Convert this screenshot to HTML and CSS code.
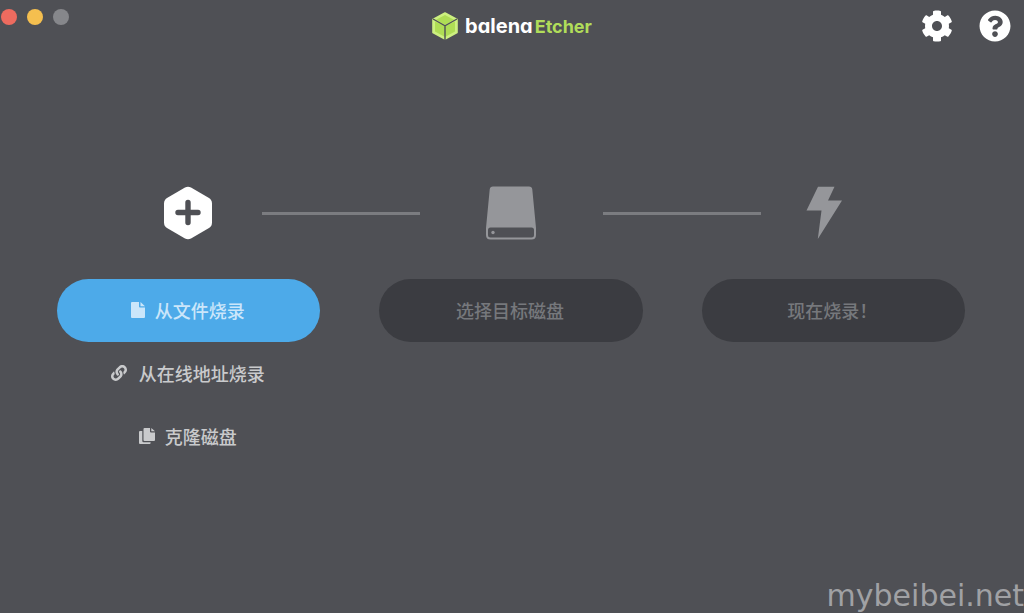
FILE: index.html
```
<!DOCTYPE html>
<html lang="zh-CN">
<head>
  <meta charset="UTF-8" />
  <meta name="viewport" content="width=device-width, initial-scale=1.0" />
  <title>balenaEtcher</title>
  <link rel="stylesheet" href="styles.css">
</head>
<body>
  <header class="topbar">
    <div class="lights">
      <span class="light red"></span>
      <span class="light yellow"></span>
      <span class="light grey"></span>
    </div>
    <div class="logo">
      <svg width="26" height="28" viewBox="0 0 26 28">
        <path d="M13 1 25 7.500v13L13 27 1 20.500v-13z" fill="#cdf080" stroke="#cdf080" stroke-width="1.600" stroke-linejoin="round"/>
        <path d="M13 3 4 7.800 13 13l9-5.200zM3 9.500v10l10 5.500V14zM23 9.500v10l-10 5.500V14z" fill="#afdd55"/>
        <path d="M1 7 13 13.800 25 7M13 13.800V28" fill="none" stroke="#4f5055" stroke-width="1.400"/>
      </svg>
      <span class="logo-text">balena<b>Etcher</b></span>
    </div>
    <div class="actions">
      <button type="button" aria-label="设置">
        <svg width="32" height="32" viewBox="0 0 512 512"><path fill="currentColor" d="M487.400 315.700l-42.600-24.600c4.300-23.200 4.300-47 0-70.200l42.600-24.600c4.900-2.800 7.100-8.600 5.500-14-11.100-35.600-30-67.800-54.700-94.600-3.800-4.100-10-5.100-14.800-2.300L380.800 110c-17.900-15.400-38.500-27.300-60.800-35.100V25.800c0-5.600-3.900-10.500-9.400-11.700-36.700-8.200-74.300-7.800-109.200 0-5.500 1.200-9.400 6.100-9.400 11.700V75c-22.200 7.900-42.800 19.800-60.800 35.100L88.700 85.500c-4.900-2.800-11-1.900-14.800 2.300-24.700 26.700-43.600 58.900-54.700 94.600-1.700 5.400.6 11.200 5.500 14L67.300 221c-4.300 23.200-4.300 47 0 70.200l-42.600 24.600c-4.900 2.800-7.100 8.600-5.500 14 11.100 35.600 30 67.800 54.700 94.600 3.800 4.100 10 5.100 14.800 2.300l42.600-24.600c17.900 15.400 38.500 27.300 60.800 35.100v49.200c0 5.600 3.900 10.500 9.400 11.700 36.700 8.200 74.300 7.800 109.200 0 5.500-1.200 9.400-6.100 9.400-11.700v-49.200c22.200-7.900 42.800-19.800 60.800-35.100l42.600 24.600c4.900 2.800 11 1.900 14.800-2.300 24.700-26.700 43.600-58.900 54.700-94.600 1.500-5.500-.7-11.300-5.600-14.100zM256 336c-44.100 0-80-35.900-80-80s35.900-80 80-80 80 35.900 80 80-35.900 80-80 80z"/></svg>
      </button>
      <button type="button" aria-label="帮助">
        <svg width="32" height="32" viewBox="0 0 512 512"><path fill="currentColor" d="M504 256c0 136.997-111.043 248-248 248S8 392.997 8 256C8 119.083 119.043 8 256 8s248 111.083 248 248zM262.655 90c-54.497 0-89.255 22.957-116.549 63.758-3.536 5.286-2.353 12.415 2.715 16.258l34.699 26.310c5.205 3.947 12.621 3.008 16.665-2.122 17.864-22.658 30.113-35.797 57.303-35.797 20.429 0 45.698 13.148 45.698 32.958 0 14.976-12.363 22.667-32.534 33.976C247.128 238.528 216 254.941 216 296v4c0 6.627 5.373 12 12 12h56c6.627 0 12-5.373 12-12v-1.333c0-28.462 83.186-29.647 83.186-106.667 0-58.002-60.165-102-116.531-102zM256 338c-25.365 0-46 20.635-46 46 0 25.364 20.635 46 46 46s46-20.636 46-46c0-25.365-20.635-46-46-46z"/></svg>
      </button>
    </div>
  </header>

  <main>
    <div class="steps">
      <div class="step source">
        <svg width="50" height="54" viewBox="0 0 50 54">
          <path d="M22 1.500Q25 0 28 1.500L46 12Q49 14 49 17.500v19Q49 40 46 42L28 52.500Q25 54 22 52.500L4 42Q1 40 1 36.500v-19Q1 14 4 12z" fill="#fff"/>
          <path d="M25 16.500v20M15 26.500h20" stroke="#4f5055" stroke-width="5.400" stroke-linecap="round"/>
        </svg>
      </div>
      <div class="line"></div>
      <div class="step drive">
        <svg width="52" height="54" viewBox="0 0 52 54">
          <path fill="#95969a" fill-rule="evenodd" d="M8 .5h36q3 0 3.300 3L51 42v7q0 4.500-4.500 4.500h-41Q1 53.500 1 49v-7L4.700 3.500Q5 .5 8 .5zM5.500 41.500Q3 41.500 3 44v5q0 2.500 2.500 2.500h41Q49 51.500 49 49v-5q0-2.500-2.500-2.500z"/>
          <circle cx="8" cy="46.500" r="1.700" fill="#95969a"/>
        </svg>
      </div>
      <div class="line"></div>
      <div class="step flash">
        <svg width="36" height="54" viewBox="0 0 36 54"><path fill="#95969a" d="M12 .8h16.500L22 14.500h14L11.800 53l3.700-28.500H.5z"/></svg>
      </div>
    </div>

    <div class="columns">
      <div class="column">
        <button type="button" class="btn primary">
          <svg width="14" height="16" viewBox="0 0 14 16"><path fill="currentColor" d="M1 0h7v4.500q0 1 1 1h5V15q0 1-1 1H1q-1 0-1-1V1q0-1 1-1zM9.500 0 14 4.200H9.500z"/></svg>
          从文件烧录
        </button>
        <button type="button" class="btn plain link">
          <svg width="16" height="16" viewBox="0 0 512 512"><path fill="currentColor" d="M326.612 185.391c59.747 59.809 58.927 155.698.36 214.590-.11.12-.24.25-.36.37l-67.200 67.200c-59.270 59.270-155.699 59.262-214.960 0-59.270-59.260-59.270-155.700 0-214.960l37.106-37.106c9.840-9.840 26.786-3.300 27.294 10.606.648 17.722 3.826 35.527 9.690 52.721 1.986 5.822.567 12.262-3.783 16.612l-13.087 13.087c-28.026 28.026-28.905 73.660-1.155 101.960 28.024 28.579 74.086 28.749 102.325.51l67.200-67.190c28.191-28.191 28.073-73.757 0-101.830-3.701-3.694-7.429-6.564-10.341-8.569a16.037 16.037 0 0 1-6.947-12.606c-.396-10.567 3.348-21.456 11.698-29.806l21.054-21.055c5.521-5.521 14.182-6.199 20.584-1.731a152.482 152.482 0 0 1 20.522 17.197zM467.547 44.449c-59.261-59.262-155.690-59.270-214.960 0l-67.200 67.200c-.12.12-.25.25-.36.37-58.566 58.892-59.387 154.781.36 214.590a152.454 152.454 0 0 0 20.521 17.196c6.402 4.468 15.064 3.789 20.584-1.731l21.054-21.055c8.350-8.350 12.094-19.239 11.698-29.806a16.037 16.037 0 0 0-6.947-12.606c-2.912-2.005-6.640-4.875-10.341-8.569-28.073-28.073-28.191-73.639 0-101.830l67.200-67.190c28.239-28.239 74.300-28.069 102.325.51 27.750 28.300 26.872 73.934-1.155 101.960l-13.087 13.087c-4.350 4.350-5.769 10.790-3.783 16.612 5.864 17.194 9.042 34.999 9.690 52.721.509 13.906 17.454 20.446 27.294 10.606l37.106-37.106c59.271-59.259 59.271-155.699.001-214.959z"/></svg>
          从在线地址烧录
        </button>
        <button type="button" class="btn plain">
          <svg width="16" height="16" viewBox="0 0 16 16"><path fill="currentColor" d="M5.500 0H11v3.500q0 1 1 1h4V12q0 1-1 1H5.500q-1 0-1-1V1q0-1 1-1zM12.300 0 16 3.300h-3.700zM1 3h2.300v10q0 1.300 1.300 1.300h7V15q0 1-1 1H1q-1 0-1-1V4q0-1 1-1z"/></svg>
          克隆磁盘
        </button>
      </div>
      <div class="column">
        <button type="button" class="btn" disabled>选择目标磁盘</button>
      </div>
      <div class="column">
        <button type="button" class="btn" disabled>现在烧录！</button>
      </div>
    </div>
  </main>

  <div class="watermark">mybeibei.net</div>
</body>
</html>
```

FILE: styles.css
```
* {
  box-sizing: border-box;
}
body {
  margin: 0;
  min-height: 100vh;
  position: relative;
  overflow: hidden;
  background: #4f5055;
  font-family: "Noto Sans CJK SC", sans-serif;
}
svg {
  display: block;
  flex: none;
}
button {
  border: 0;
  padding: 0;
  background: none;
  color: #fff;
  font: inherit;
  cursor: pointer;
}
.topbar {
  display: grid;
  grid-template-columns: 1fr auto 1fr;
  align-items: start;
}
.lights {
  display: flex;
  gap: 10px;
  padding: 9px 1px;
}
.light {
  width: 16px;
  height: 16px;
  border-radius: 50%;
}
.red {
  background: #ed6b5f;
}
.yellow {
  background: #f5bf4f;
}
.grey {
  background: #86878b;
}
.logo {
  display: flex;
  align-items: flex-start;
  gap: 7px;
  padding-top: 12px;
}
.logo-text {
  font-family: Inter, sans-serif;
  font-size: 20px;
  line-height: 29px;
  font-weight: 700;
  font-feature-settings: "cv11";
  color: #fff;
}
.logo-text b {
  margin-left: 2px;
  font-size: 18px;
  font-weight: 700;
  color: #b1dd5a;
}
.actions {
  display: flex;
  justify-content: flex-end;
  gap: 26px;
  padding: 10px 13px 0 0;
}
main {
  padding-top: 144px;
}
.steps {
  display: flex;
  align-items: center;
  padding: 0 136px 0 114px;
}
.step {
  display: flex;
  justify-content: center;
}
.source {
  width: 148px;
}
.drive {
  width: 183px;
  padding-right: 2px;
}
.flash {
  width: 127px;
  padding-right: 2px;
}
.line {
  flex: 1;
  height: 3px;
  background: #7b7c80;
}
.columns {
  display: grid;
  grid-template-columns: repeat(3, 1fr);
  gap: 59px;
  padding: 39px 59px 0 57px;
}
.btn {
  display: flex;
  align-items: center;
  justify-content: center;
  gap: 10px;
  width: 100%;
  height: 63px;
  padding: 0 2px 2px 0;
  border-radius: 32px;
  font-size: 18px;
  font-weight: 500;
}
.btn:disabled {
  background: #3b3c41;
  color: #76787c;
  cursor: default;
}
.primary {
  background: #4daae9;
  color: #cbe6fa;
}
.plain {
  color: #c9cacc;
}
.link {
  gap: 12px;
}
.watermark {
  position: absolute;
  right: 0;
  bottom: 0;
  font-family: "DejaVu Sans", sans-serif;
  font-size: 30px;
  line-height: 34px;
  color: #a0a1a4;
}
```
